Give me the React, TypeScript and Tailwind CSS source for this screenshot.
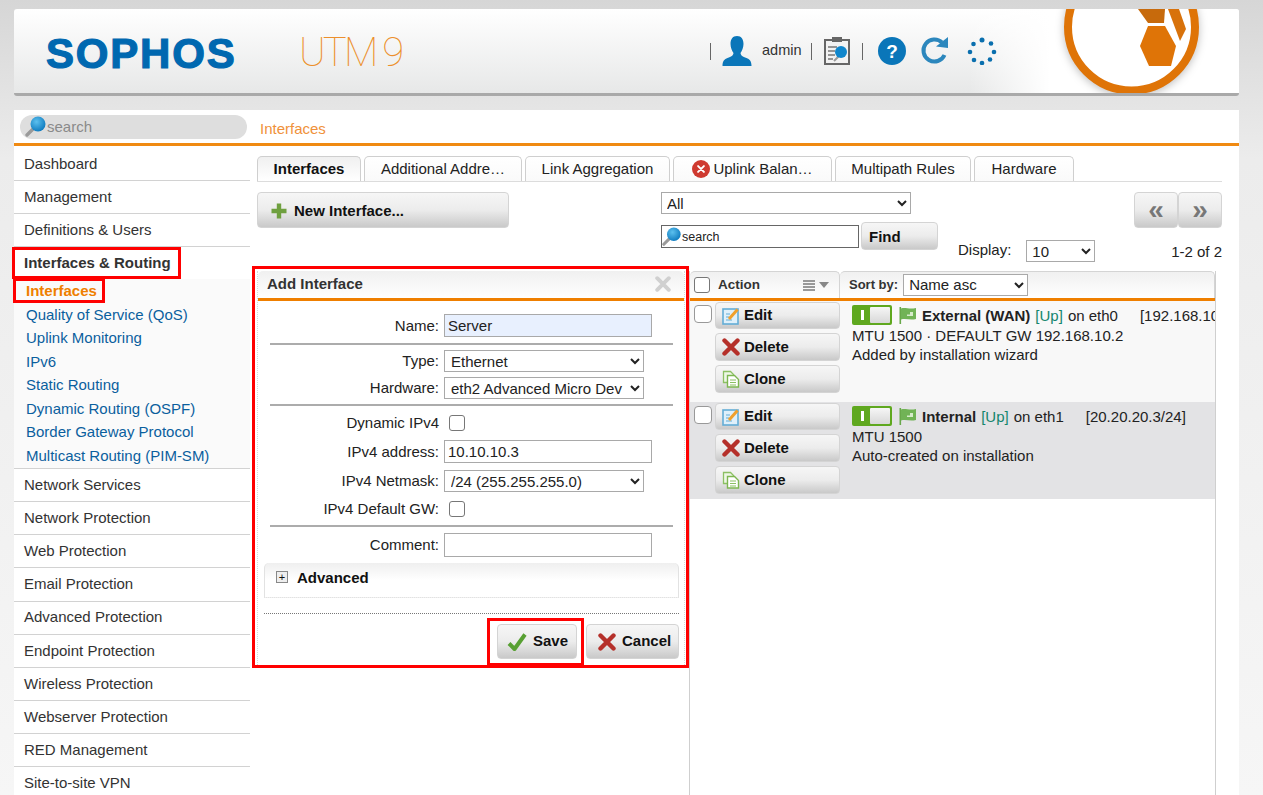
import type { ReactNode } from 'react';

const topMenu = ['Dashboard', 'Management', 'Definitions & Users'];
const subMenu = ['Quality of Service (QoS)', 'Uplink Monitoring', 'IPv6', 'Static Routing', 'Dynamic Routing (OSPF)', 'Border Gateway Protocol', 'Multicast Routing (PIM-SM)'];
const bottomMenu = ['Network Services', 'Network Protection', 'Web Protection', 'Email Protection', 'Advanced Protection', 'Endpoint Protection', 'Wireless Protection', 'Webserver Protection', 'RED Management', 'Site-to-site VPN'];

const tabs = [
  { label: 'Interfaces', width: 'w-[104px]', active: true },
  { label: 'Additional Addre…', width: 'w-[158px]' },
  { label: 'Link Aggregation', width: 'w-[145px]' },
  { label: 'Uplink Balan…', width: 'w-[159px]', error: true },
  { label: 'Multipath Rules', width: 'w-[136px]' },
  { label: 'Hardware', width: 'w-[100px]' },
];

const btn = 'flex items-center rounded-[4px] border border-[#d4d4d4] bg-gradient-to-b from-[#f6f6f6] via-[#ececec] to-[#c9c9c9] font-bold text-[15px] text-[#111]';
const field = 'h-[23px] border border-[#a9a9a9] px-[3px] text-[15px] text-[#222] outline-none';
const selectCls = 'h-[22px] border border-[#a9a9a9] bg-white text-[15px] text-[#222] outline-none';
const checkbox = 'block h-4 w-4 appearance-none rounded-[3px] border border-[#777] bg-white';
const rowCheckbox = 'block h-[18px] w-[18px] appearance-none rounded-[4px] border border-[#999] bg-white';

function Magnifier({ size = 22 }: { size?: number }) {
  return (
    <svg width={size} height={size} viewBox="0 0 22 22" className="shrink-0">
      <defs>
        <radialGradient id="lens" cx="0.4" cy="0.35" r="0.7">
          <stop offset="0" stopColor="#5cc0ee" />
          <stop offset="1" stopColor="#0b78bd" />
        </radialGradient>
      </defs>
      <path d="M8.500 12.500 2 19" stroke="#9a9a9a" strokeWidth="3.400" strokeLinecap="round" />
      <circle cx="13" cy="8" r="7.500" fill="url(#lens)" />
    </svg>
  );
}

function PlusIcon() {
  return (
    <svg width="18" height="18" viewBox="0 0 18 18" className="shrink-0">
      <path d="M9 1.500v15M1.500 9h15" stroke="#6fa03f" strokeWidth="4.400" />
    </svg>
  );
}

function CrossIcon({ size = 18, color = '#b5302a' }: { size?: number; color?: string }) {
  return (
    <svg width={size} height={size} viewBox="0 0 18 18" className="shrink-0">
      <path d="M2.500 2.500l13 13M15.500 2.500l-13 13" stroke={color} strokeWidth="4.400" strokeLinecap="round" />
    </svg>
  );
}

function CheckMark() {
  return (
    <svg width="20" height="20" viewBox="0 0 20 20" className="shrink-0">
      <path d="M2 11.500 7.500 17 18 2.500" fill="none" stroke="#58a033" strokeWidth="4" strokeLinejoin="round" />
    </svg>
  );
}

function EditIcon() {
  return (
    <svg width="18" height="18" viewBox="0 0 18 18" className="shrink-0">
      <rect x="1" y="2" width="15" height="15" fill="#dff0fa" stroke="#63add6" strokeWidth="1.600" />
      <path d="M4 7h4M4 10h3M4 13h6" stroke="#63add6" strokeWidth="1" />
      <path d="M7 12 15.500 2.500" stroke="#f0a02c" strokeWidth="3" />
    </svg>
  );
}

function CloneIcon() {
  return (
    <svg width="18" height="18" viewBox="0 0 18 18" className="shrink-0">
      <path d="M1.500 1.500h7l3 3v8h-10z" fill="#eef7e6" stroke="#8cc063" strokeWidth="1.300" />
      <path d="M5.500 5.500h7l4 4v7.500h-11z" fill="#fff" stroke="#7db651" strokeWidth="1.400" />
      <path d="M8 10h6M8 12.500h6M8 15h6" stroke="#8cc063" strokeWidth="1.100" />
    </svg>
  );
}

function Toggle() {
  return (
    <span className="flex h-[20px] w-[40px] shrink-0 items-center rounded-[2px] bg-[#5fa81f] p-[2px]">
      <span className="flex h-full w-[16px] items-center justify-center">
        <span className="h-[10px] w-[3px] bg-white" />
      </span>
      <span className="h-full flex-1 rounded-[1px] bg-gradient-to-b from-[#f6f6f6] to-[#d8d8d8]" />
    </span>
  );
}

function FlagIcon() {
  return (
    <svg width="19" height="19" viewBox="0 0 19 19" className="shrink-0">
      <path d="M1.500 1h1.600v17H1.500z" fill="#68a84a" />
      <path d="M3 2.500c4-1.500 8 1 15-.5v11c-6 1.500-10-1-15 .5z" fill="#71b356" />
      <path d="M9 8.500h3V6l3 0v4H9z" fill="#d6ebcb" />
    </svg>
  );
}

function Tab({ label, width, active, error }: { label: string; width: string; active?: boolean; error?: boolean }) {
  return (
    <div className={`${width} flex h-[25px] items-center justify-center gap-[3px] rounded-t-[5px] border border-b-0 border-[#cfcfcf] bg-gradient-to-b ${active ? 'from-[#f0f0f0] to-white font-bold text-[#111]' : 'from-white to-[#fafafa] text-[#222]'}`}>
      {error && (
        <span className="flex h-[18px] w-[18px] items-center justify-center rounded-full bg-[#cf3a30]">
          <CrossIcon size={8} color="#fff" />
        </span>
      )}
      {label}
    </div>
  );
}

function FormRow({ label, className, children }: { label: string; className: string; children: ReactNode }) {
  return (
    <div className={`flex items-center ${className}`}>
      <span className="w-[181px] text-right text-[15px] leading-[22px] text-[#222]">{label}</span>
      <div className="ml-[5px] flex items-center">{children}</div>
    </div>
  );
}

function FormRule({ className }: { className: string }) {
  return <div className={`ml-[12px] mr-[11px] h-[2px] bg-[#acacac] ${className}`} />;
}

function ActionButtons() {
  return (
    <div className="ml-[3px] flex w-[126px] flex-col gap-[4px]">
      <div className={`${btn} h-[27px] gap-[4px] pl-[6px]`}><EditIcon />Edit</div>
      <div className={`${btn} h-[28px] gap-[4px] pl-[6px]`}><CrossIcon />Delete</div>
      <div className={`${btn} h-[28px] gap-[4px] pl-[6px]`}><CloneIcon />Clone</div>
    </div>
  );
}

function RowTitle({ name, port, net, gap }: { name: string; port: string; net: string; gap: string }) {
  return (
    <div className="flex h-[22px] items-center whitespace-nowrap">
      <Toggle />
      <span className="ml-[6px]"><FlagIcon /></span>
      <span className="ml-[5px] font-bold text-[#222]">{name}</span>
      <span className="ml-[5px] text-[#14866d]">[Up]</span>
      <span className="ml-[5px] text-[#222]">on {port}</span>
      <span className={`${gap} text-[#222]`}>{net}</span>
    </div>
  );
}

function HeaderIcons() {
  return (
    <div className="relative ml-[696px] flex items-center text-[14.500px] text-[#333]">
      <span className="h-[17px] w-[1px] bg-[#666]" />
      <svg width="30" height="30" viewBox="0 0 30 30" className="ml-[11px]">
        <path d="M15 0c4.500 0 6.500 3.500 6.500 8 0 3.500-1.500 7-3 9 .5 3 2 3.500 6 5 3 1 5 3 5 8H.5c0-5 2-7 5-8 4-1.500 5.500-2 6-5-1.500-2-3-5.500-3-9 0-4.500 2-8 6.500-8z" fill="#0a76b9" />
      </svg>
      <span className="ml-[10px]">admin</span>
      <span className="ml-[9px] h-[17px] w-[1px] bg-[#666]" />
      <svg width="26" height="28" viewBox="0 0 26 28" className="ml-[12px]">
        <rect x="1" y="3" width="24" height="24" fill="#f2f2f2" stroke="#666" strokeWidth="2" />
        <rect x="8" y="0" width="10" height="5" fill="#666" />
        <path d="M4 10h9M4 14h7M4 18h7M4 22h5" stroke="#777" strokeWidth="1.400" />
        <path d="M10 24l5-5" stroke="#999" strokeWidth="2" />
        <circle cx="17" cy="15" r="6" fill="#0f86cc" />
      </svg>
      <span className="ml-[12px] h-[17px] w-[1px] bg-[#666]" />
      <svg width="28" height="28" viewBox="0 0 28 28" className="ml-[15px]">
        <circle cx="14" cy="14" r="14" fill="#0a76b9" />
        <text x="14" y="20.500" textAnchor="middle" fontFamily="Liberation Sans" fontWeight="700" fontSize="19" fill="#fff">?</text>
      </svg>
      <svg width="30" height="28" viewBox="0 0 30 28" className="ml-[14px]">
        <path d="M22 5.500A11 11 0 1 0 24.500 18" fill="none" stroke="#2c87bd" strokeWidth="4" />
        <path d="M16 9.500 28 11V0z" fill="#2c87bd" />
      </svg>
      <svg width="30" height="28" viewBox="0 0 30 28" className="ml-[17px]" fill="#0a6fae">
        <circle cx="15" cy="3" r="2.500" />
        <circle cx="24" cy="6.500" r="2.300" />
        <circle cx="27" cy="15" r="2.300" />
        <circle cx="23" cy="22.500" r="2.300" />
        <circle cx="15" cy="26" r="2.300" />
        <circle cx="7" cy="23" r="2.300" />
        <circle cx="3" cy="15" r="2.300" />
        <circle cx="6.500" cy="7" r="2.300" />
      </svg>
    </div>
  );
}

function Header() {
  return (
    <header className="relative flex h-[87px] items-center overflow-hidden rounded-[3px] border-b-[3px] border-[#a9a9a9] bg-gradient-to-b from-white to-[#e7e8e8]">
      <div className="absolute right-0 top-0 h-full w-[270px] bg-gradient-to-r from-transparent via-white via-30% to-white" />
      <div className="absolute left-[32px] top-[21px] font-bold text-[42px] leading-[48px] tracking-[1.800px] text-[#0068b0] [-webkit-text-stroke:1.2px_#0068b0]">SOPHOS</div>
      <div className="absolute left-[285px] top-[21px] font-['Roboto',sans-serif] font-thin text-[40px] leading-[46px] tracking-[-2.800px] text-[#ec8f2b]">UTM 9</div>
      <HeaderIcons />
      <svg width="135" height="86" viewBox="0 0 135 86" className="absolute left-[1050px] top-0 overflow-visible drop-shadow-[0_2px_4px_rgba(0,0,0,0.25)]">
        <circle cx="67.500" cy="18" r="63.500" fill="#fff" stroke="#df7407" strokeWidth="8" />
        <path d="M84 17h17l11 20-5 20H85l-9-20z" fill="#df7407" />
        <path d="M74 0h27l-1 14H84z" fill="#c76a0c" />
        <path d="M104 0h11l7 20-6 12z" fill="#d8720b" />
      </svg>
    </header>
  );
}

function Sidebar() {
  return (
    <nav className="w-[236px] shrink-0 pt-[2px] text-[15px] text-[#333]">
      {topMenu.map((item) => (
        <div key={item} className="flex h-[33px] items-center border-b border-[#d2d2d2] pl-[10px]">{item}</div>
      ))}
      <div className="relative flex h-[32px] items-center pl-[10px] font-bold">
        Interfaces &amp; Routing
        <span className="absolute left-[-2px] top-[0px] h-[32px] w-[169px] border-[3px] border-[#ff0000]" />
      </div>
      <div className="border-b border-[#d2d2d2] bg-[#fafafa]">
        <div className="relative flex h-[24.300px] items-center pl-[12px] font-bold text-[#ef7f00]">
          Interfaces
          <span className="absolute left-[-1px] top-[-1px] h-[25px] w-[92px] border-[3px] border-[#ff0000]" />
        </div>
        {subMenu.map((item) => (
          <div key={item} className="flex h-[23.500px] items-center pl-[12px] text-[#0a5f9e]">{item}</div>
        ))}
      </div>
      {bottomMenu.map((item) => (
        <div key={item} className="flex h-[33.200px] items-center border-b border-[#d2d2d2] pl-[10px]">{item}</div>
      ))}
    </nav>
  );
}

function Toolbar() {
  return (
    <div className="mt-[10px] flex h-[79px] items-start">
      <div className={`${btn} h-[36px] w-[252px] gap-[6px] pl-[12px] pt-[2px]`}><PlusIcon />New Interface...</div>
      <div className="ml-[152px] w-[277px]">
        <select className={`${selectCls} block w-[250px] pl-[1px]`} defaultValue="All"><option>All</option></select>
        <div className="mt-[8px] flex items-start">
          <div className="mt-[3px] flex h-[23px] w-[198px] items-center border border-[#666] bg-white text-[12.500px] text-[#222]">
            <Magnifier size={20} /><span className="pt-[1px]">search</span>
          </div>
          <div className={`${btn} ml-[2px] h-[28px] w-[77px] pl-[7px] pt-[2px]`}>Find</div>
        </div>
      </div>
      <div className="ml-[20px] mt-[47px] flex items-center text-[#222]">
        <span>Display:</span>
        <select className={`${selectCls} ml-[15px] mt-[1px] w-[69px] pl-[1px]`} defaultValue="10"><option>10</option></select>
      </div>
      <div className="ml-auto flex flex-col items-end">
        <div className="flex">
          <div className={`${btn} h-[36px] w-[44px] justify-center text-[28px] leading-none !text-[#777]`}>«</div>
          <div className={`${btn} h-[36px] w-[44px] justify-center text-[28px] leading-none !text-[#777]`}>»</div>
        </div>
        <span className="mt-[13px] text-[#222]">1-2 of 2</span>
      </div>
    </div>
  );
}

function AddInterface() {
  return (
    <section className="relative h-[396px] w-[428px] shrink-0 border-x border-dotted border-[#d8d8d8]">
      <span className="absolute left-[-6px] top-[-5px] h-[402px] w-[437px] border-[3px] border-[#ff0000]" />
      <div className="flex h-[30px] items-center justify-between rounded-t-[5px] border-b-[3px] border-[#ef7f00] bg-gradient-to-b from-[#f0f0f0] to-white pb-[1px] pl-[9px] pr-[13px] font-bold text-[#333]">
        Add Interface
        <CrossIcon size={16} color="#d0d0d0" />
      </div>
      <FormRow label="Name:" className="mt-[13px]">
        <input readOnly value="Server" className={`${field} w-[208px] bg-[#e8f0fe]`} />
      </FormRow>
      <FormRule className="mt-[6px]" />
      <FormRow label="Type:" className="mt-[5px]">
        <select className={`${selectCls} w-[200px] pl-[2px]`} defaultValue="Ethernet"><option>Ethernet</option></select>
      </FormRow>
      <FormRow label="Hardware:" className="mt-[5px]">
        <select className={`${selectCls} w-[200px] pl-[2px]`} defaultValue="eth2"><option value="eth2">eth2 Advanced Micro Dev</option></select>
      </FormRow>
      <FormRule className="mt-[5px]" />
      <FormRow label="Dynamic IPv4" className="mt-[6px]">
        <input type="checkbox" className={`${checkbox} ml-[5px]`} />
      </FormRow>
      <FormRow label="IPv4 address:" className="mt-[6px]">
        <input readOnly value="10.10.10.3" className={`${field} w-[208px] bg-white`} />
      </FormRow>
      <FormRow label="IPv4 Netmask:" className="mt-[7px]">
        <select className={`${selectCls} w-[200px] pl-[2px]`} defaultValue="24"><option value="24">/24 (255.255.255.0)</option></select>
      </FormRow>
      <FormRow label="IPv4 Default GW:" className="mt-[6px]">
        <input type="checkbox" className={`${checkbox} ml-[5px]`} />
      </FormRow>
      <FormRule className="mt-[5px]" />
      <FormRow label="Comment:" className="mt-[6px]">
        <input readOnly className={`${field} h-[24px] w-[208px] bg-white`} />
      </FormRow>
      <div className="ml-[6px] mr-[5px] mt-[6px] flex h-[35px] items-start rounded-t-[5px] border-x border-b border-[#e2e2e2] bg-gradient-to-b from-[#efefef] to-white to-50% pl-[11px] pt-[4px] font-bold text-[#111] [border-bottom-style:dotted]">
        <span className="mt-[4px] flex h-[12px] w-[12px] items-center justify-center border border-[#888] bg-[#eee] text-[11px] font-normal leading-none">+</span>
        <span className="ml-[9px]">Advanced</span>
      </div>
      <div className="ml-[6px] mr-[5px] mt-[15px] border-t border-dotted border-[#777]" />
      <div className="mr-[5px] mt-[10px] flex justify-end gap-[9px]">
        <div className={`${btn} relative h-[35px] w-[80px] gap-[6px] pl-[9px]`}>
          <CheckMark />Save
          <span className="absolute left-[-11px] top-[-7px] h-[48px] w-[97px] border-[3px] border-[#ff0000]" />
        </div>
        <div className={`${btn} h-[35px] w-[93px] gap-[6px] pl-[11px]`}><CrossIcon />Cancel</div>
      </div>
    </section>
  );
}

function InterfaceList() {
  return (
    <section className="ml-[4px] h-[540px] w-[527px] shrink-0 border-x border-[#cfcfcf]">
      <div className="flex h-[30px] border-b-[3px] border-[#ef7f00]">
        <div className="flex w-[150px] items-center rounded-t-[5px] border-r border-t border-[#d4d4d4] bg-gradient-to-b from-[#f0f0f0] to-white pl-[4px] font-bold text-[13.500px] text-[#333]">
          <input type="checkbox" className={checkbox} />
          <span className="ml-[8px]">Action</span>
          <span className="ml-[43px] flex flex-col gap-[1px]">
            <span className="h-[2px] w-[12px] bg-[#999]" />
            <span className="h-[2px] w-[12px] bg-[#999]" />
            <span className="h-[2px] w-[12px] bg-[#999]" />
            <span className="h-[2px] w-[12px] bg-[#999]" />
          </span>
          <span className="ml-[4px] border-x-[5px] border-t-[6px] border-x-transparent border-t-[#888]" />
        </div>
        <div className="flex flex-1 items-center rounded-t-[5px] border-r border-t border-[#d4d4d4] bg-gradient-to-b from-[#f0f0f0] to-white pb-[1px] pl-[9px] font-bold text-[13px] text-[#333]">
          Sort by:
          <select className={`${selectCls} ml-[5px] w-[125px] pl-[1px] font-normal`} defaultValue="Name asc"><option>Name asc</option></select>
        </div>
      </div>
      <div className="flex h-[101px] overflow-hidden bg-[#f8f8f8] pt-[1px]">
        <div className="flex w-[150px] shrink-0 items-start pl-[4px]">
          <input type="checkbox" className={`${rowCheckbox} mt-[3px]`} />
          <ActionButtons />
        </div>
        <div className="ml-[12px] whitespace-nowrap pt-[2px] leading-[19px] text-[#222]">
          <RowTitle name="External (WAN)" port="eth0" net="[192.168.10.2/24]" gap="ml-[22px]" />
          <div>MTU 1500 · DEFAULT GW 192.168.10.2</div>
          <div>Added by installation wizard</div>
        </div>
      </div>
      <div className="flex h-[97px] overflow-hidden bg-[#e3e3e5] pt-[1px]">
        <div className="flex w-[150px] shrink-0 items-start pl-[4px]">
          <input type="checkbox" className={`${rowCheckbox} mt-[3px]`} />
          <ActionButtons />
        </div>
        <div className="ml-[12px] whitespace-nowrap pt-[2px] leading-[19px] text-[#222]">
          <RowTitle name="Internal" port="eth1" net="[20.20.20.3/24]" gap="ml-[22px]" />
          <div>MTU 1500</div>
          <div>Auto-created on installation</div>
        </div>
      </div>
    </section>
  );
}

export default function App() {
  return (
    <div className="h-[795px] w-[1263px] overflow-hidden bg-gradient-to-b from-[#d6d6d6] via-[#ececec] via-20% to-[#f6f6f6] pl-[14px] pr-[24px] pt-[9px] font-['Liberation_Sans',Arial,sans-serif] text-[15px]">
      <Header />
      <main className="mt-[14px] h-[700px] bg-white">
        <div className="flex h-[36px] border-b-[3px] border-[#f08a12] pt-[5px]">
          <div className="ml-[6px] flex h-[24px] w-[227px] items-center rounded-full bg-[#dedede] pl-[5px] text-[#8a8a8a]">
            <Magnifier />search
          </div>
          <span className="ml-[13px] mt-[3px] text-[#f0913a]">Interfaces</span>
        </div>
        <div className="flex">
          <Sidebar />
          <div className="flex-1 pl-[7px] pr-[17px] pt-[10px]">
            <div className="flex gap-[3px] border-b border-[#dcdcdc]">
              {tabs.map((tab) => <Tab key={tab.label} {...tab} />)}
            </div>
            <Toolbar />
            <div className="flex">
              <AddInterface />
              <InterfaceList />
            </div>
          </div>
        </div>
      </main>
    </div>
  );
}
